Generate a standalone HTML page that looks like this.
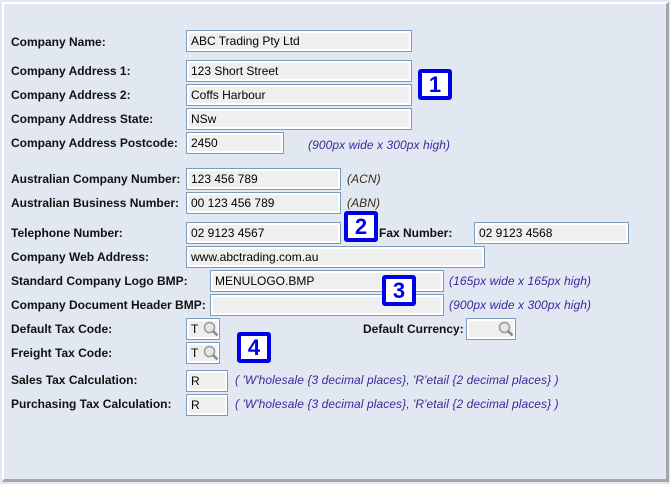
<!DOCTYPE html>
<html><head><meta charset="utf-8"><style>
html,body{margin:0;padding:0}
body{width:670px;height:484px;background:#e1e8f2;position:relative;overflow:hidden;font-family:"Liberation Sans",sans-serif;font-size:12px}
.panel{position:absolute;left:2px;top:2px;width:662px;height:475px;border-left:2px solid #fff;border-top:2px solid #fff;border-right:3px solid #a3a6ab;border-bottom:3px solid #a3a6ab;background:#e1e8f2}
.l{position:absolute;left:11px;font-weight:bold;color:#111;white-space:nowrap;margin-top:-1px}
.i{position:absolute;box-sizing:border-box;height:22px;border:1px solid #7e9bbb;background:#efefef;box-shadow:inset 0 0 0 2px #fff;padding:3px 0 0 4px;color:#000;font-size:12px;white-space:nowrap}
.n{position:absolute;font-style:italic;color:#3b2a9a;font-size:12px;white-space:nowrap;letter-spacing:0.08px;margin-top:-1px}
.n2{color:#3a2c18}
.b{position:absolute;box-sizing:border-box;width:34px;height:31px;border:4px solid #0000e6;border-radius:3px;background:#fff;color:#0000e6;font-weight:bold;font-size:22px;text-align:center;line-height:23px}
.mag{position:absolute;top:2px;width:16px;height:16px}
</style></head><body>
<div class="panel"></div>
<div class="l" style="top:36px">Company Name:</div>
<div class="i" style="left:186px;top:30px;width:226px">ABC Trading Pty Ltd</div>
<div class="l" style="top:65px">Company Address 1:</div>
<div class="i" style="left:186px;top:60px;width:226px">123 Short Street</div>
<div class="l" style="top:89px">Company Address 2:</div>
<div class="i" style="left:186px;top:84px;width:226px">Coffs Harbour</div>
<div class="l" style="top:113px">Company Address State:</div>
<div class="i" style="left:186px;top:108px;width:226px">NSw</div>
<div class="l" style="top:137px">Company Address Postcode:</div>
<div class="i" style="left:186px;top:132px;width:98px">2450</div>
<div class="n" style="left:308px;top:139px">(900px wide x 300px high)</div>
<div class="b" style="left:418px;top:69px">1</div>

<div class="l" style="top:173px">Australian Company Number:</div>
<div class="i" style="left:186px;top:168px;width:155px">123 456 789</div>
<div class="n n2" style="left:347px;top:173px">(ACN)</div>
<div class="l" style="top:197px">Australian Business Number:</div>
<div class="i" style="left:186px;top:192px;width:155px">00 123 456 789</div>
<div class="n n2" style="left:347px;top:197px">(ABN)</div>
<div class="l" style="top:227px">Telephone Number:</div>
<div class="i" style="left:186px;top:222px;width:155px">02 9123 4567</div>
<div class="b" style="left:344px;top:211px">2</div>
<div class="l" style="left:379px;top:227px">Fax Number:</div>
<div class="i" style="left:474px;top:222px;width:155px">02 9123 4568</div>
<div class="l" style="top:251px">Company Web Address:</div>
<div class="i" style="left:186px;top:246px;width:299px">www.abctrading.com.au</div>
<div class="l" style="top:275px">Standard Company Logo BMP:</div>
<div class="i" style="left:210px;top:270px;width:234px">MENULOGO.BMP</div>
<div class="n" style="left:449px;top:275px">(165px wide x 165px high)</div>
<div class="l" style="top:299px">Company Document Header BMP:</div>
<div class="i" style="left:210px;top:294px;width:234px"></div>
<div class="n" style="left:449px;top:299px">(900px wide x 300px high)</div>
<div class="b" style="left:382px;top:275px">3</div>

<div class="l" style="top:323px">Default Tax Code:</div>
<div class="i" style="left:186px;top:318px;width:34px">T<svg class="mag" style="left:16px" viewBox="0 0 16 16"><circle cx="6.5" cy="6.5" r="5" fill="#e6e6e6" stroke="#999" stroke-width="1.5"/><line x1="10" y1="10" x2="14.5" y2="14.5" stroke="#888" stroke-width="2.5"/></svg></div>
<div class="l" style="left:363px;top:323px">Default Currency:</div>
<div class="i" style="left:466px;top:318px;width:50px"><svg class="mag" style="left:31px" viewBox="0 0 16 16"><circle cx="6.5" cy="6.5" r="5" fill="#e6e6e6" stroke="#999" stroke-width="1.5"/><line x1="10" y1="10" x2="14.5" y2="14.5" stroke="#888" stroke-width="2.5"/></svg></div>
<div class="l" style="top:347px">Freight Tax Code:</div>
<div class="i" style="left:186px;top:342px;width:34px">T<svg class="mag" style="left:16px" viewBox="0 0 16 16"><circle cx="6.5" cy="6.5" r="5" fill="#e6e6e6" stroke="#999" stroke-width="1.5"/><line x1="10" y1="10" x2="14.5" y2="14.5" stroke="#888" stroke-width="2.5"/></svg></div>
<div class="b" style="left:237px;top:332px">4</div>
<div class="l" style="top:374px">Sales Tax Calculation:</div>
<div class="i" style="left:186px;top:370px;width:42px">R</div>
<div class="n" style="left:235px;top:374px">( 'W'holesale {3 decimal places}, 'R'etail {2 decimal places} )</div>
<div class="l" style="top:398px">Purchasing Tax Calculation:</div>
<div class="i" style="left:186px;top:394px;width:42px">R</div>
<div class="n" style="left:235px;top:398px">( 'W'holesale {3 decimal places}, 'R'etail {2 decimal places} )</div>
</body></html>
